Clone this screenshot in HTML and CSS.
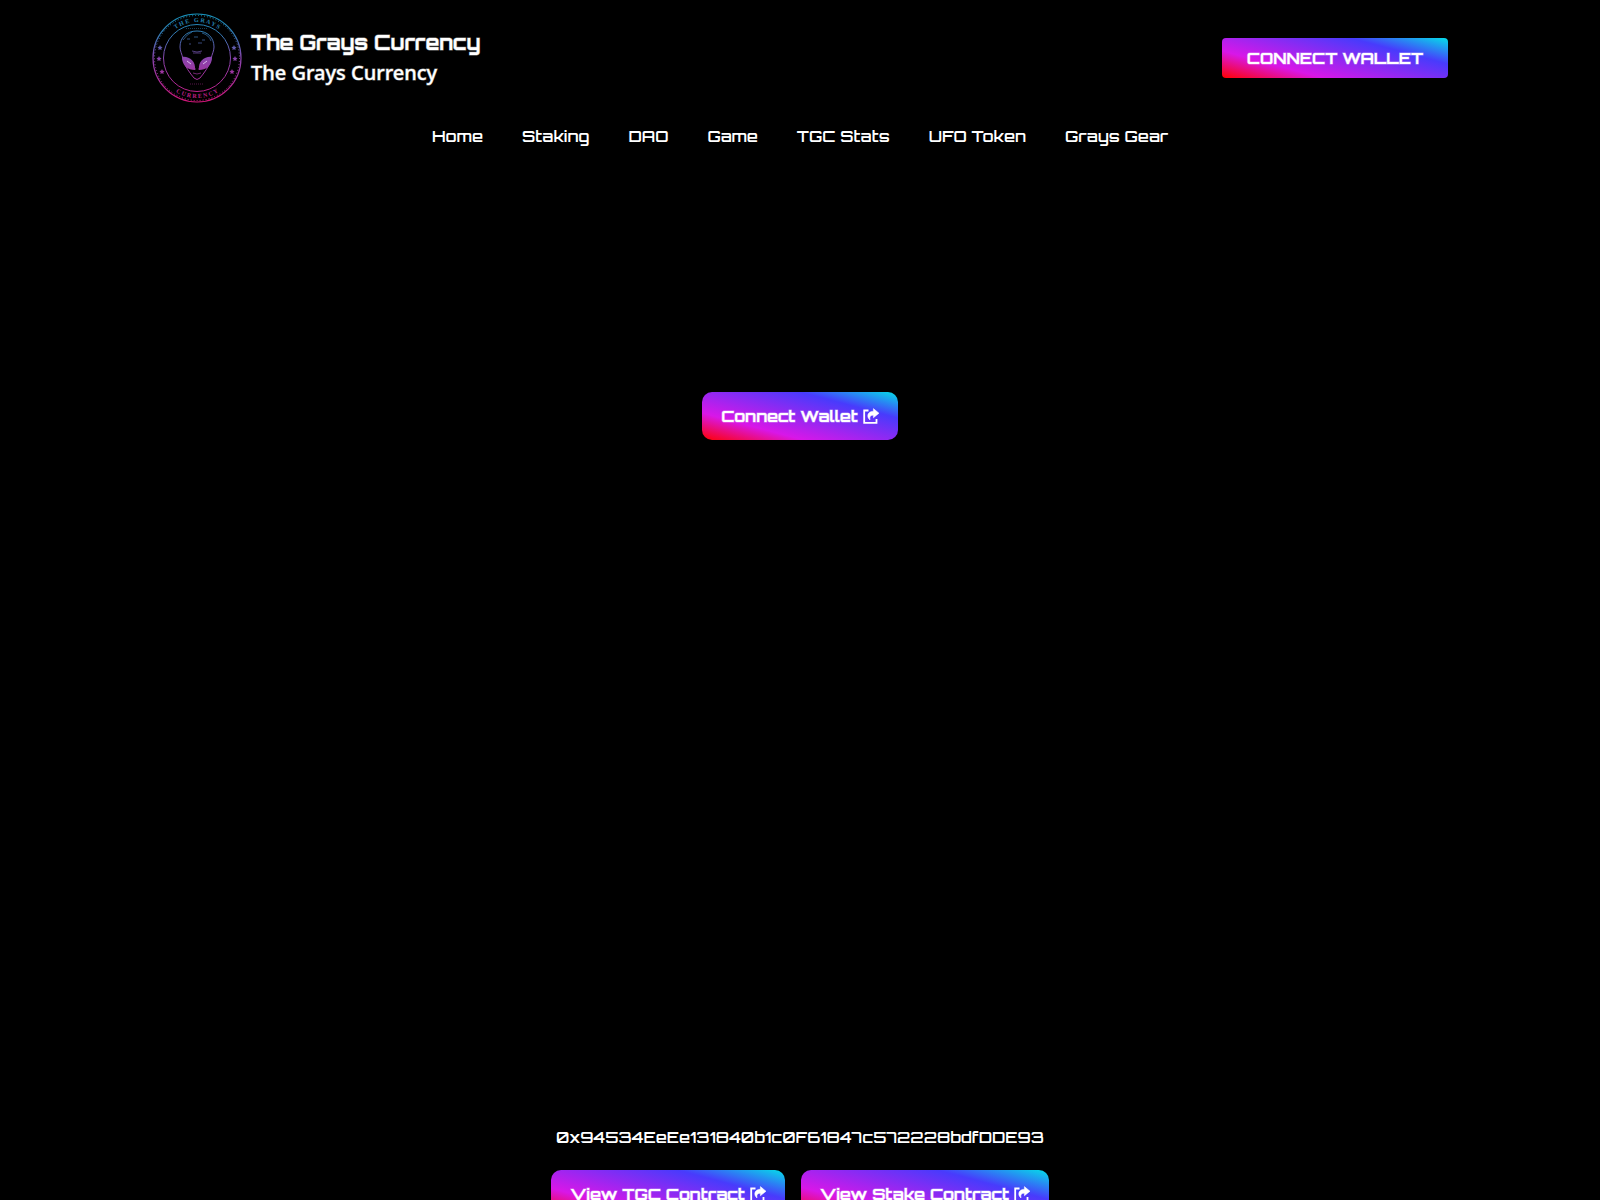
FILE: index.html
```html
<!DOCTYPE html>
<html lang="en">

<head>
  <meta charset="utf-8">
  <meta name="viewport" content="width=device-width, initial-scale=1">
  <title>The Grays Currency</title>
  <link rel="stylesheet" href="styles.css">
</head>

<body>

  <svg width="0" height="0" class="sprite" aria-hidden="true">
    <symbol id="share" viewBox="0 0 16 16">
      <path d="M5.500 2.500H1.200v12.300h12.300v-3.800" fill="none" stroke="currentColor" stroke-width="1.8" />
      <path d="M10.400.6 16 5.200l-5.600 4.600V7.200C7.600 7.200 6.300 8.600 7 12 3.200 9 4.300 3.300 10.400 3.200z" fill="currentColor" stroke="currentColor" stroke-width=".5" />
    </symbol>
  </svg>

  <header>
    <div class="topbar">
      <a class="brand" href="#">
        <svg class="logo" viewBox="0 0 90 90" role="img" aria-label="The Grays Currency logo">
          <defs>
            <linearGradient id="fade" gradientUnits="userSpaceOnUse" x1="0" y1="0" x2="0" y2="90">
              <stop offset="0" stop-color="#1591b8" />
              <stop offset=".25" stop-color="#3579b4" />
              <stop offset=".5" stop-color="#8945ad" />
              <stop offset=".75" stop-color="#a82c99" />
              <stop offset="1" stop-color="#d51477" />
            </linearGradient>
            <path id="arc-top" d="M9 45a36 36 0 0 1 72 0" />
            <path id="arc-bottom" d="M5 45a40 40 0 0 0 80 0" />
          </defs>
          <g fill="none" stroke="url(#fade)">
            <circle cx="45" cy="45" r="44" stroke-width="1.2" />
            <circle cx="45" cy="45" r="42.500" stroke-dasharray="1 2" />
            <circle cx="45" cy="45" r="33.500" />
            <path d="M45 18c-11 0-17 7-17 16 0 4 2 7 3 12 2 8 7 14 11 19q3 3 6 0c4-5 9-11 11-19 1-5 3-8 3-12 0-9-6-16-17-16z" />
            <path d="M31 27q4-6 9-8M50 20q7 2 9 8M35 26h3M42 24h4M50 27h3M37 31h2M46 30h4M40 38q5 2 10 0M41 40h8M43 55v2M47 55v2M41 60q4 2 8 0" stroke-width=".7" />
            <path d="M34 15.500h22M38 71h14" stroke-width="1" stroke-dasharray="1 1" opacity=".5" />
          </g>
          <g fill="url(#fade)">
            <path d="M30 44c7-1 14 4 13 13-7 0-13-4-13-13zM60 44c-7-1-14 4-13 13 7 0 13-4 13-13z" />
            <path d="M8 32l.8 1.700 1.800.2-1.300 1.300.3 1.800L8 36.200 6.400 37l.3-1.800-1.300-1.300 1.800-.2zM7 43l.8 1.700 1.800.2-1.300 1.300.3 1.800L7 47.200 5.400 48l.3-1.800-1.300-1.300 1.800-.2zM10 56l.8 1.700 1.800.2-1.300 1.300.3 1.800-1.600-.8-1.600.8.3-1.800L7.400 57.900l1.800-.2zM82 32l.8 1.700 1.800.2-1.300 1.300.3 1.800-1.600-.8-1.600.8.3-1.800-1.300-1.300 1.800-.2zM83 43l.8 1.700 1.800.2-1.300 1.300.3 1.800-1.600-.8-1.600.8.3-1.800-1.300-1.300 1.800-.2zM80 56l.8 1.700 1.800.2-1.300 1.300.3 1.800-1.600-.8-1.600.8.3-1.800-1.300-1.300 1.800-.2z" />
            <text class="seal"><textPath href="#arc-top" startOffset="50%">T H E &#160; G R A Y S</textPath></text>
            <text class="seal"><textPath href="#arc-bottom" startOffset="50%">C U R R E N C Y</textPath></text>
          </g>
          <path d="M35 48l4 3M55 48l-4 3" stroke="#d9b9e8" />
        </svg>
        <span class="brand-text">
          <span class="title">The Grays Currency</span>
          <span class="subtitle">The Grays Currency</span>
        </span>
      </a>
      <button class="button wallet" type="button">CONNECT WALLET</button>
    </div>
    <nav>
      <a href="#">Home</a>
      <a href="#">Staking</a>
      <a href="#">DAO</a>
      <a href="#">Game</a>
      <a href="#">TGC Stats</a>
      <a href="#">UFO Token</a>
      <a href="#">Grays Gear</a>
    </nav>
  </header>

  <main>
    <button class="button connect" type="button">Connect Wallet <svg class="icon"><use href="#share" /></svg></button>
  </main>

  <footer>
    <p class="address">0x94534EeEe131840b1c0F61847c572228bdfDDE93</p>
    <div class="contracts">
      <a class="button tgc" href="#">View TGC Contract <svg class="icon"><use href="#share" /></svg></a>
      <a class="button stake" href="#">View Stake Contract <svg class="icon"><use href="#share" /></svg></a>
    </div>
  </footer>

</body>

</html>
```

FILE: styles.css
```css
* {
  box-sizing: border-box;
}

body {
  margin: 0;
  background-color: #000;
  color: #fff;
  font-family: Orbitron, "DejaVu Sans", sans-serif;
  font-size: 16px;
  font-weight: 600;
  line-height: 24px;
}

a {
  color: inherit;
  text-decoration: none;
}

.sprite {
  position: absolute;
}

.topbar {
  width: 81%;
  margin: 0 auto;
  padding-top: 12px;
  display: flex;
  align-items: center;
  justify-content: space-between;
}

.brand {
  display: flex;
  align-items: center;
  gap: 9px;
}

.logo {
  width: 90px;
  height: 92px;
}

.seal {
  font-family: "Liberation Serif", serif;
  font-size: 6px;
  font-weight: bold;
  text-anchor: middle;
}

.brand-text {
  display: flex;
  flex-direction: column;
  line-height: 30px;
  -webkit-text-stroke: 1px rgba(255, 255, 255, 0.5);
}

.title {
  font-size: 20px;
  font-weight: bold;
}

.subtitle {
  font-family: "Noto Sans", sans-serif;
  font-size: 20px;
  font-weight: 500;
}

.button {
  display: flex;
  align-items: center;
  justify-content: center;
  gap: 5px;
  height: 48px;
  padding: 0;
  border: 0;
  border-radius: 10px;
  background-image: linear-gradient(15deg, #ff0000, #d817e8 27%, #483bfc 74%, #04dfe8);
  color: #fff;
  font-family: inherit;
  font-size: 16px;
  font-weight: bold;
  white-space: nowrap;
  cursor: pointer;
  -webkit-text-stroke: 1px rgba(255, 255, 255, 0.4);
}

.icon {
  width: 16px;
  height: 16px;
}

.wallet {
  width: 226px;
  height: 40px;
  border-radius: 4px;
}

.connect {
  width: 196px;
}

.tgc {
  width: 234px;
}

.stake {
  width: 248px;
}

nav {
  display: flex;
  justify-content: center;
  gap: 39px;
  padding: 20px 0;
}

main {
  display: flex;
  justify-content: center;
  height: 957px;
  padding-top: 224px;
}

.address {
  margin: 0;
  text-align: center;
}

.contracts {
  display: flex;
  justify-content: center;
  gap: 16px;
  padding: 21px 0;
}
```
